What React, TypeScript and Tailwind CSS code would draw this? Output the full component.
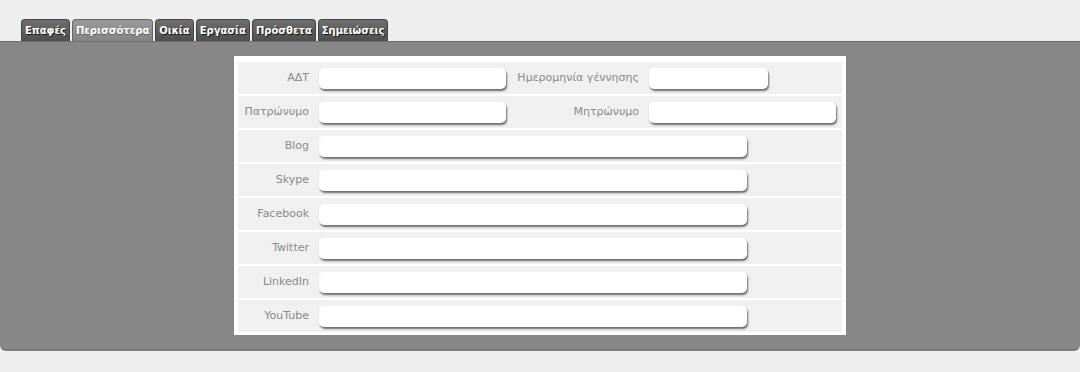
import React from "react";

const tabs = ["Επαφές", "Περισσότερα", "Οικία", "Εργασία", "Πρόσθετα", "Σημειώσεις"];
const activeTab = "Περισσότερα";

const socials = ["Blog", "Skype", "Facebook", "Twitter", "LinkedIn", "YouTube"];

function Field({ width }: { width: string }) {
  return (
    <div
      className={`h-[21px] ${width} rounded-[5px] bg-white shadow-[1px_2px_2px_rgba(0,0,0,0.55)]`}
    />
  );
}

function Label({ text, width }: { text: string; width: string }) {
  return <div className={`${width} shrink-0 pr-[10px] text-right`}>{text}</div>;
}

export default function App() {
  return (
    <div className="min-h-[372px] bg-[#eeeeee] pt-[19px] font-['DejaVu_Sans',Verdana,sans-serif]">
      <div className="flex gap-[2px] pl-[21px]">
        {tabs.map((t) =>
          t === activeTab ? (
            <div
              key={t}
              className="flex h-[22px] items-center rounded-t-[4px] border border-b-0 border-[#666] bg-gradient-to-b from-[#9a9a9a] to-[#848484] px-[3px] text-[10px] font-bold text-white [text-shadow:0_1px_1px_rgba(0,0,0,0.35)]"
            >
              {t}
            </div>
          ) : (
            <div
              key={t}
              className="flex h-[22px] items-center rounded-t-[4px] border border-b-0 border-[#444] bg-gradient-to-b from-[#6e6e6e] to-[#4f4f4f] px-[3px] text-[10px] font-bold text-white [text-shadow:1px_1px_1px_rgba(0,0,0,0.8)]"
            >
              {t}
            </div>
          )
        )}
      </div>
      <div className="rounded-b-[6px] border-t border-b-2 border-t-[#6f6f6f] border-b-[#7a7a7a] bg-[#878787] pb-[14px] pt-[14px]">
        <div className="ml-[234px] w-[612px] bg-white px-[4px] pb-[3px] pt-[6px] text-[11px] text-[#8a8a8a]">
          <div className="flex flex-col gap-[2px]">
            <div className="flex h-[32px] items-center bg-[#f0f0f0]">
              <Label text="ΑΔΤ" width="w-[81px]" />
              <Field width="w-[187px]" />
              <Label text="Ημερομηνία γέννησης" width="w-[143px]" />
              <Field width="w-[119px]" />
            </div>
            <div className="flex h-[32px] items-center bg-[#f0f0f0]">
              <Label text="Πατρώνυμο" width="w-[81px]" />
              <Field width="w-[187px]" />
              <Label text="Μητρώνυμο" width="w-[143px]" />
              <Field width="w-[187px]" />
            </div>
            {socials.map((s) => (
              <div key={s} className="flex h-[32px] items-center bg-[#f0f0f0]">
                <Label text={s} width="w-[81px]" />
                <Field width="w-[428px]" />
              </div>
            ))}
          </div>
        </div>
      </div>
    </div>
  );
}
